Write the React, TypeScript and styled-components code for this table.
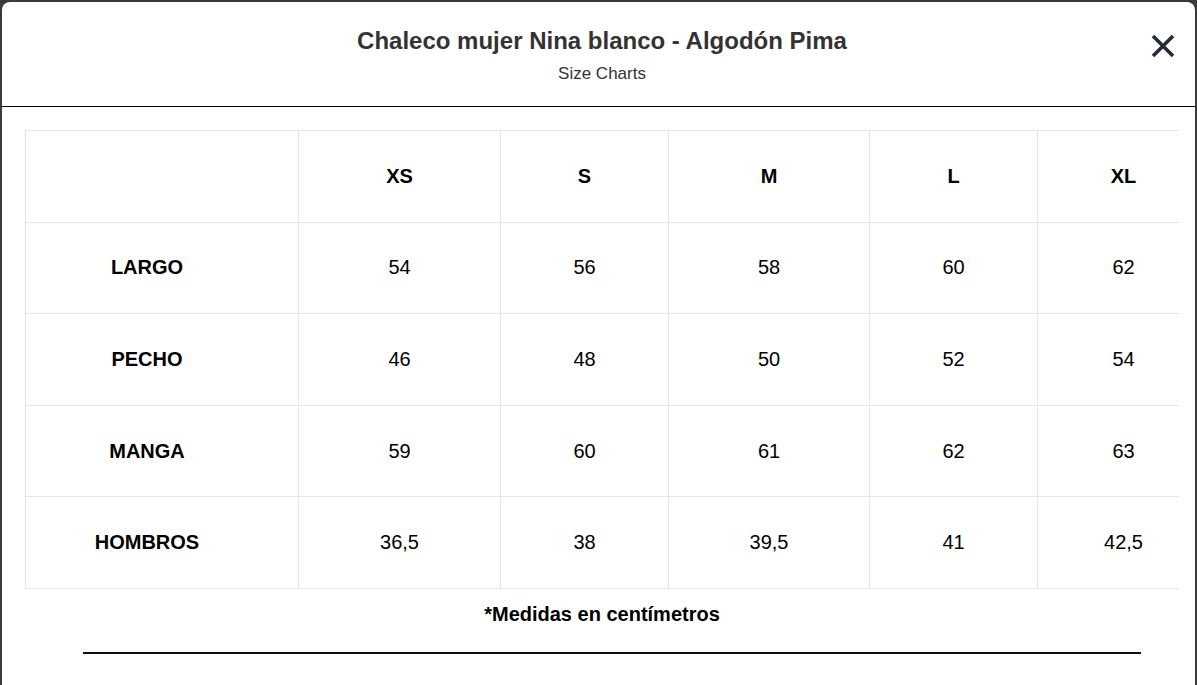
import React from "react";
import styled, { createGlobalStyle } from "styled-components";

const Global = createGlobalStyle`
  html, body { margin: 0; padding: 0; background: #3a3a3a; height: 100%; overflow: hidden; }
  #root { height: 100%; }
  * { box-sizing: border-box; }
`;

const Backdrop = styled.div`
  height: 685px;
  padding: 2px 2px 0 2px;
  background: #3a3a3a;
`;

const Modal = styled.div`
  height: 100%;
  background: #fff;
  border-radius: 8px 8px 0 0;
  font-family: "Liberation Sans", Arial, sans-serif;
  color: #000;
  display: flex;
  flex-direction: column;
`;

const Header = styled.header`
  position: relative;
  padding: 25px 0 0 7px;
  height: 105px;
  border-bottom: 1px solid #000;
  text-align: center;
`;

const Title = styled.h2`
  margin: 0;
  font-size: 24px;
  line-height: 28px;
  font-weight: 700;
  color: #333;
  letter-spacing: 0;
`;

const Subtitle = styled.div`
  margin-top: 9px;
  font-size: 17px;
  line-height: 19px;
  color: #333;
`;

const Close = styled.button`
  position: absolute;
  right: 19px;
  top: 31px;
  width: 26px;
  height: 26px;
  border: 0;
  padding: 0;
  background: none;
  cursor: pointer;
  display: flex;
  align-items: center;
  justify-content: center;
`;

const Body = styled.div`
  padding: 23px 16px 0 23px;
`;

const TableWrap = styled.div`
  overflow: hidden;
`;

const Table = styled.table`
  border-collapse: collapse;
  width: 1184px;
  table-layout: fixed;
`;

const Cell = styled.td<{ $head?: boolean; $label?: boolean }>`
  height: 91.6px;
  border: 1px solid #e6e6e6;
  text-align: center;
  vertical-align: middle;
  font-size: 20px;
  font-weight: ${(p) => (p.$head || p.$label ? 700 : 400)};
  padding: ${(p) => (p.$label ? "0 30px 0 0" : "0")};
  color: #000;
`;

const Note = styled.p`
  margin: 13px 0 0 0;
  text-align: center;
  font-size: 20px;
  line-height: 24px;
  font-weight: 700;
  letter-spacing: 0;
`;

const Rule = styled.div`
  margin: 26px 0 0 58px;
  width: 1058px;
  height: 2px;
  background: #111;
`;

const widths = [273, 202, 168, 201, 168, 172];
const sizes = ["XS", "S", "M", "L", "XL"];
const rows: [string, string[]][] = [
  ["LARGO", ["54", "56", "58", "60", "62"]],
  ["PECHO", ["46", "48", "50", "52", "54"]],
  ["MANGA", ["59", "60", "61", "62", "63"]],
  ["HOMBROS", ["36,5", "38", "39,5", "41", "42,5"]],
];

export default function App() {
  return (
    <>
      <Global />
      <Backdrop>
        <Modal>
          <Header>
            <Title>Chaleco mujer Nina blanco - Algodón Pima</Title>
            <Subtitle>Size Charts</Subtitle>
            <Close aria-label="Cerrar">
              <svg width="24" height="24" viewBox="0 0 24 24">
                <path d="M2 2 L22 22 M22 2 L2 22" stroke="#222b36" strokeWidth="3.6" strokeLinecap="butt" />
              </svg>
            </Close>
          </Header>
          <Body>
            <TableWrap>
              <Table>
                <colgroup>
                  {widths.map((w, i) => (
                    <col key={i} style={{ width: w }} />
                  ))}
                </colgroup>
                <thead>
                  <tr>
                    <Cell as="th" $head />
                    {sizes.map((s) => (
                      <Cell as="th" $head key={s}>
                        {s}
                      </Cell>
                    ))}
                  </tr>
                </thead>
                <tbody>
                  {rows.map(([label, vals]) => (
                    <tr key={label}>
                      <Cell $label>{label}</Cell>
                      {vals.map((v, i) => (
                        <Cell key={i}>{v}</Cell>
                      ))}
                    </tr>
                  ))}
                </tbody>
              </Table>
            </TableWrap>
            <Note>*Medidas en centímetros</Note>
            <Rule />
          </Body>
        </Modal>
      </Backdrop>
    </>
  );
}
